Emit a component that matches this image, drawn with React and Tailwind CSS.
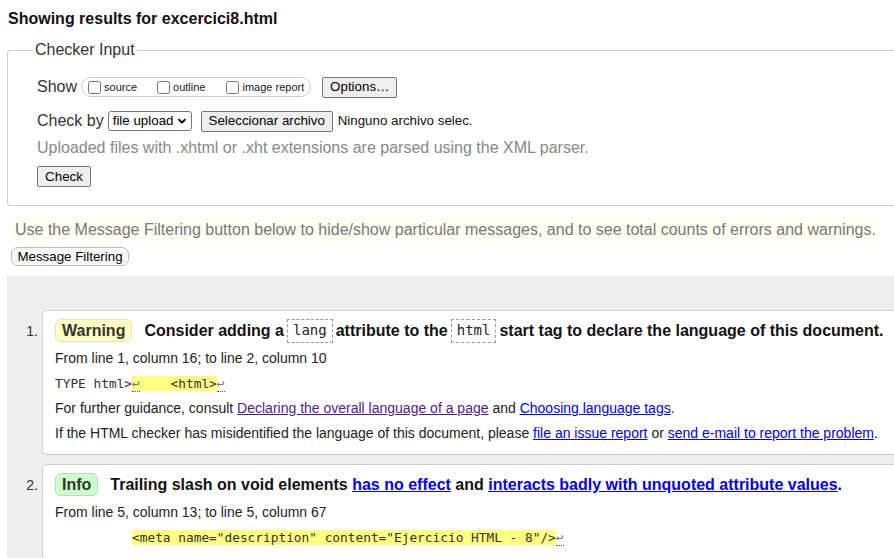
import React from "react";

const sans = { fontFamily: '"Liberation Sans", Arial, sans-serif' };

const Ret = () => (
  <span className="text-[#777] border-b border-dotted border-[#555]">↩</span>
);

const Badge = ({ tone, children }) => (
  <span
    className={
      "inline-flex items-center h-[23px] px-[6px] rounded-[6px] border font-bold text-[16px] " +
      (tone === "warn"
        ? "bg-[#ffffc4] border-[#e2e2b8]"
        : "bg-[#ccffcc] border-[#b8dcb8]")
    }
  >
    {children}
  </span>
);

const Code = ({ children }) => (
  <code className="inline-flex items-center h-[24px] px-[5px] mx-[3px] border border-dashed border-[#999] font-normal text-[14px] text-[#222] font-['DejaVu_Sans_Mono',monospace]">
    {children}
  </code>
);

const Btn = ({ className = "", children }) => (
  <button
    className={
      "bg-[#efefef] border border-[#767676] rounded-[2px] text-[13.33px] text-black leading-none " +
      className
    }
  >
    {children}
  </button>
);

const Line = ({ children }) => (
  <div className="h-[25px] leading-[25px] text-[14px] text-[#222] whitespace-nowrap">
    {children}
  </div>
);

const CodeLine = ({ children }) => (
  <div className="h-[25px] leading-[25px] text-[12.8px] text-[#333] whitespace-pre font-['DejaVu_Sans_Mono',monospace]">
    {children}
  </div>
);

const Message = ({ n, badge, tone, children, mt = "" }) => (
  <li className={"flex " + mt}>
    <span className="w-[35px] shrink-0 mt-[9px] h-[24px] leading-[24px] pr-[4px] text-right text-[14px] text-[#333]">
      {n}.
    </span>
    <div className="flex-1 bg-white border border-[#ccc] rounded-l-[4px] pt-[8px] pb-[8px] pl-[12px]">
      <div className="flex items-center h-[24px] whitespace-nowrap">
        <Badge tone={tone}>{badge}</Badge>
        <span className="ml-[12px] font-bold text-[16px] text-[#111] flex items-center">
          {children[0]}
        </span>
      </div>
      <div className="mt-[3px]">{children.slice(1)}</div>
    </div>
  </li>
);

export default function App() {
  return (
    <div className="w-[894px] h-[558px] overflow-hidden bg-white text-[#333]" style={sans}>
      <div className="w-[940px]">
        <h2 className="pt-[9px] pl-[8px] h-[29px] leading-[20px] text-[16px] font-bold text-[#111]">
          Showing results for excercici8.html
        </h2>

        <fieldset className="ml-[7px] mt-[11px] border border-[#ccc] rounded-[3px] pl-[25px] pb-[17px]">
          <legend className="px-[2px] leading-[20px] text-[16px] text-[#333]">Checker Input</legend>
          <div className="pl-[4px] mt-[16px]">
            <div className="flex items-center h-[22px] text-[16px]">
              <span>Show</span>
              <span className="ml-[4px] flex items-center h-[20px] pl-[6px] pr-[6px] border border-[#ccc] rounded-full text-[11px] text-[#222]">
                <label className="flex items-center mr-[20px]">
                  <input type="checkbox" className="w-[13px] h-[13px] m-0" />
                  <span className="ml-[3px]">source</span>
                </label>
                <label className="flex items-center mr-[21px]">
                  <input type="checkbox" className="w-[13px] h-[13px] m-0" />
                  <span className="ml-[3px]">outline</span>
                </label>
                <label className="flex items-center">
                  <input type="checkbox" className="w-[13px] h-[13px] m-0" />
                  <span className="ml-[3px]">image report</span>
                </label>
              </span>
              <Btn className="ml-[11px] h-[21px] w-[75px]">Options…</Btn>
            </div>

            <div className="flex items-center h-[22px] mt-[12px] text-[16px]">
              <span>Check by</span>
              <span className="ml-[4px] flex items-center h-[20px] w-[84px] pl-[4px] pr-[4px] border border-[#767676] rounded-[3px] text-[13.33px] text-black">
                <span className="flex-1">file upload</span>
                <svg width="10" height="10" viewBox="0 0 10 10">
                  <path d="M1.5 3.2 L5 6.7 L8.5 3.2" fill="none" stroke="#000" strokeWidth="1.8" />
                </svg>
              </span>
              <Btn className="ml-[9px] h-[21px] w-[132px]">Seleccionar archivo</Btn>
              <span className="ml-[5px] text-[13.33px] text-[#111]">Ninguno archivo selec.</span>
            </div>

            <div className="mt-[6px] h-[20px] leading-[20px] text-[16px] text-[#888]">
              Uploaded files with .xhtml or .xht extensions are parsed using the XML parser.
            </div>

            <Btn className="mt-[8px] h-[21px] w-[54px]">Check</Btn>
          </div>
        </fieldset>

        <div className="ml-[10px] mt-[11px] w-[870px] h-[26px] leading-[26px] pl-[5px] bg-[#fffff4] text-[16px] text-[#777] whitespace-nowrap">
          Use the Message Filtering button below to hide/show particular messages, and to see total counts of errors and warnings.
        </div>
        <button className="ml-[11px] mt-[4px] h-[19px] w-[118px] border border-[#bbb] rounded-[7px] bg-[#fafafa] text-[13.33px] text-black leading-none">
          Message Filtering
        </button>

        <div className="ml-[7px] mt-[8px] bg-[#eee] pt-[34px] pb-[40px]">
          <ol>
            <Message n={1} badge="Warning" tone="warn">
              <>
                Consider adding a <Code>lang</Code> attribute to the <Code>html</Code> start tag to declare the language of this document.
              </>
              <Line key="a">From line 1, column 16; to line 2, column 10</Line>
              <CodeLine key="b">
                {"TYPE html>"}
                <span className="bg-[#ffff80]">
                  <Ret />
                  {"    <html>"}
                </span>
                <Ret />
              </CodeLine>
              <Line key="c">
                For further guidance, consult{" "}
                <a href="#" className="underline text-[#551a8b]">
                  Declaring the overall language of a page
                </a>{" "}
                and{" "}
                <a href="#" className="underline text-[#0000ee]">
                  Choosing language tags
                </a>
                .
              </Line>
              <Line key="d">
                If the HTML checker has misidentified the language of this document, please{" "}
                <a href="#" className="underline text-[#0000ee]">
                  file an issue report
                </a>{" "}
                or{" "}
                <a href="#" className="underline text-[#0000ee]">
                  send e-mail to report the problem
                </a>
                .
              </Line>
            </Message>

            <Message n={2} badge="Info" tone="info" mt="mt-[9px]">
              <>
                Trailing slash on void elements&nbsp;
                <a href="#" className="underline text-[#0000ee]">has no effect</a>
                &nbsp;and&nbsp;
                <a href="#" className="underline text-[#0000ee]">
                  interacts badly with unquoted attribute values
                </a>
                .
              </>
              <Line key="a">From line 5, column 13; to line 5, column 67</Line>
              <CodeLine key="b">
                {"          "}
                <span className="bg-[#ffff80]">{'<meta name="description" content="Ejercicio HTML - 8"/>'}</span>
                <Ret />
              </CodeLine>
            </Message>
          </ol>
        </div>
      </div>
    </div>
  );
}
